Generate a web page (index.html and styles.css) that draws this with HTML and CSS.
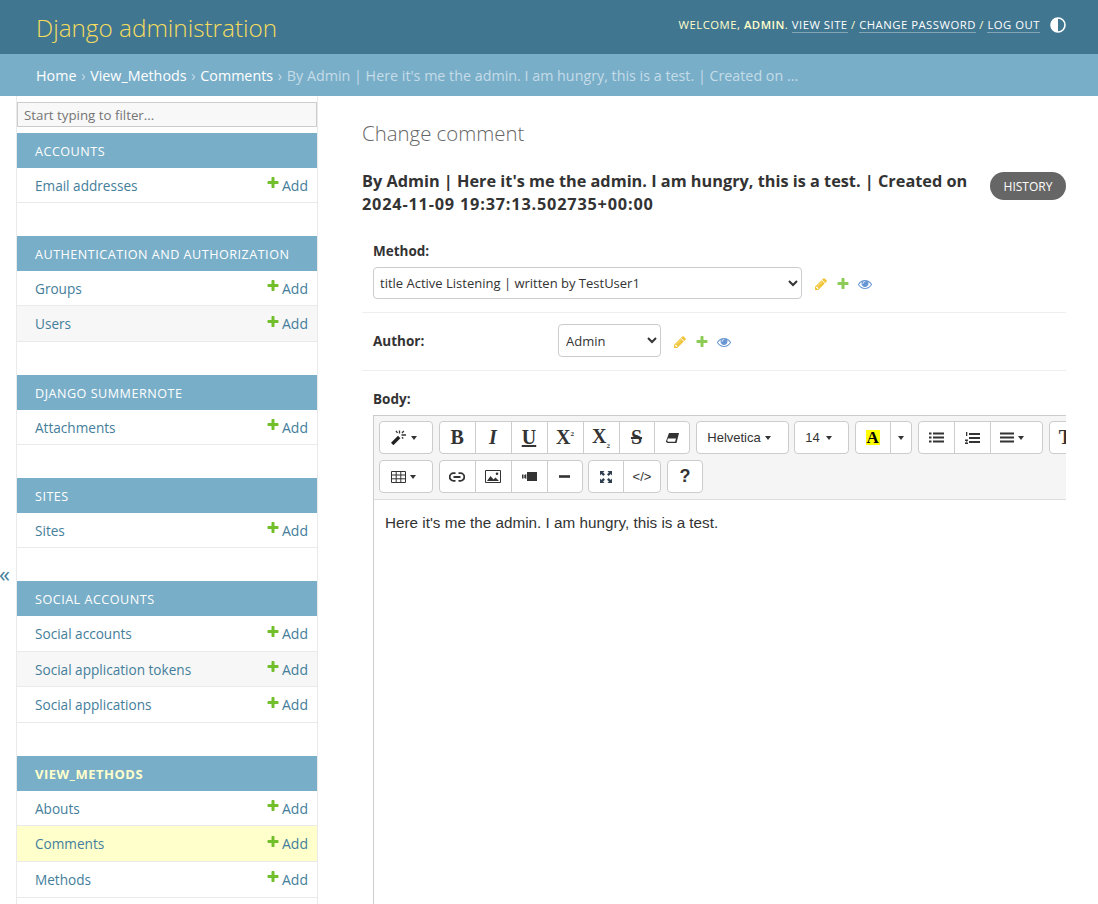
FILE: index.html
```html
<!DOCTYPE html>
<html lang="en">
<head>
    <meta charset="UTF-8">
    <title>Change comment | Django site admin</title>
    <link rel="stylesheet" href="styles.css">
</head>
<body>
    <svg class="defs" width="0" height="0">
        <symbol id="i-plus" viewBox="0 0 1792 1792"><path d="M1600 736v192q0 40-28 68t-68 28h-416v416q0 40-28 68t-68 28h-192q-40 0-68-28t-28-68v-416h-416q-40 0-68-28t-28-68v-192q0-40 28-68t68-28h416v-416q0-40 28-68t68-28h192q40 0 68 28t28 68v416h416q40 0 68 28t28 68z"/></symbol>
        <symbol id="i-pencil" viewBox="0 0 1792 1792"><path d="M491 1536l91-91-235-235-91 91v107h128v128h107zm523-928q0-22-22-22-10 0-17 7l-542 542q-7 7-7 17 0 22 22 22 10 0 17-7l542-542q7-7 7-17zm-54-192l416 416-832 832h-416v-416zm683 96q0 53-37 90l-166 166-416-416 166-165q36-38 90-38 53 0 91 38l235 234q37 39 37 91z"/></symbol>
        <symbol id="i-eye" viewBox="0 0 1792 1792"><path d="M1664 960q-152-236-381-353 61 104 61 225 0 185-131.5 316.5t-316.5 131.5-316.5-131.5-131.5-316.5q0-121 61-225-229 117-381 353 133 205 333.5 326.5t434.5 121.5 434.5-121.5 333.5-326.5zm-720-384q0-20-14-34t-34-14q-125 0-214.5 89.5t-89.5 214.5q0 20 14 34t34 14 34-14 14-34q0-86 61-147t147-61q20 0 34-14t14-34zm848 384q0 34-20 69-140 230-376.5 368.5t-499.5 138.5-499.5-139-376.5-368q-20-35-20-69t20-69q140-229 376.5-368t499.5-139 499.5 139 376.5 368q20 35 20 69z"/></symbol>
    </svg>

    <header class="header">
        <div class="brand">Django administration</div>
        <div class="tools">
            <div class="tool-links">Welcome, <strong>Admin</strong>. <a href="#">View site</a> / <a href="#">Change password</a> / <a href="#">Log out</a></div>
            <svg class="theme" width="16" height="16" viewBox="0 0 16 16"><circle cx="8" cy="8" r="7" fill="none" stroke="#fff" stroke-width="1.6"/><path d="M8 1a7 7 0 0 0 0 14z" fill="#fff"/></svg>
        </div>
    </header>
    <nav class="crumbs">
        <a href="#">Home</a> <i>›</i> <a href="#">View_Methods</a> <i>›</i> <a href="#">Comments</a> <i>›</i> By Admin | Here it's me the admin. I am hungry, this is a test. | Created on ...
    </nav>

    <main class="main">
        <div class="toggle">«</div>
        <aside class="sidebar">
            <input class="filter" placeholder="Start typing to filter...">

            <section class="module">
                <h3>Accounts</h3>
                <div class="row"><a href="#">Email addresses</a><span class="add"><svg><use href="#i-plus"/></svg>Add</span></div>
            </section>
            <section class="module">
                <h3>Authentication and Authorization</h3>
                <div class="row"><a href="#">Groups</a><span class="add"><svg><use href="#i-plus"/></svg>Add</span></div>
                <div class="row alt"><a href="#">Users</a><span class="add"><svg><use href="#i-plus"/></svg>Add</span></div>
            </section>
            <section class="module">
                <h3>Django Summernote</h3>
                <div class="row"><a href="#">Attachments</a><span class="add"><svg><use href="#i-plus"/></svg>Add</span></div>
            </section>
            <section class="module">
                <h3>Sites</h3>
                <div class="row"><a href="#">Sites</a><span class="add"><svg><use href="#i-plus"/></svg>Add</span></div>
            </section>
            <section class="module">
                <h3>Social Accounts</h3>
                <div class="row"><a href="#">Social accounts</a><span class="add"><svg><use href="#i-plus"/></svg>Add</span></div>
                <div class="row alt"><a href="#">Social application tokens</a><span class="add"><svg><use href="#i-plus"/></svg>Add</span></div>
                <div class="row"><a href="#">Social applications</a><span class="add"><svg><use href="#i-plus"/></svg>Add</span></div>
            </section>
            <section class="module">
                <h3 class="current">View_Methods</h3>
                <div class="row"><a href="#">Abouts</a><span class="add"><svg><use href="#i-plus"/></svg>Add</span></div>
                <div class="row selected"><a href="#">Comments</a><span class="add"><svg><use href="#i-plus"/></svg>Add</span></div>
                <div class="row"><a href="#">Methods</a><span class="add"><svg><use href="#i-plus"/></svg>Add</span></div>
            </section>
        </aside>

        <div class="content">
            <h1>Change comment</h1>
            <div class="title-row">
                <h2>By Admin | Here it's me the admin. I am hungry, this is a test. | Created on <span class="stamp">2024-11-09 19:37:13.502735+00:00</span></h2>
                <a class="history" href="#">History</a>
            </div>

            <div class="field stacked">
                <label>Method:</label>
                <div class="control">
                    <select class="method-select"><option>title Active Listening | written by TestUser1</option></select>
                    <span class="rel">
                        <svg class="pencil"><use href="#i-pencil"/></svg>
                        <svg class="plus"><use href="#i-plus"/></svg>
                        <svg class="eye"><use href="#i-eye"/></svg>
                    </span>
                </div>
            </div>
            <div class="field inline">
                <label>Author:</label>
                <div class="control">
                    <select class="author-select"><option>Admin</option></select>
                    <span class="rel">
                        <svg class="pencil"><use href="#i-pencil"/></svg>
                        <svg class="plus"><use href="#i-plus"/></svg>
                        <svg class="eye"><use href="#i-eye"/></svg>
                    </span>
                </div>
            </div>
            <div class="field body-field">
                <label>Body:</label>
                <div class="editor">
                    <div class="toolbar">
                        <div class="tool-row">
                            <div class="group"><button class="w54"><svg width="16" height="15" viewBox="0 0 16 15"><path d="M0 12.800L7 5.800 9.400 8.200 2.400 15.200z" fill="#222"/><path d="M8.500.5v3M10.500 5h4.500M5 .8l1.500 2.200M12.800 1l-1.800 2M12.300 8.500L11 7.200" stroke="#333" stroke-width="1.300" fill="none"/></svg><b class="caret"></b></button></div>
                            <div class="group">
                                <button class="serif"><b>B</b></button>
                                <button class="serif"><b><em>I</em></b></button>
                                <button class="serif"><b><u>U</u></b></button>
                                <button class="serif"><b>X<sup>2</sup></b></button>
                                <button class="serif"><b>X<sub>2</sub></b></button>
                                <button class="serif trim"><b><s>S</s></b></button>
                                <button class="trim"><svg width="14" height="12" viewBox="0 0 14 12"><path d="M4 1h9.500q.5 0 .4.600L11.500 11H2.500L.8 9.800z" fill="#333"/><path d="M2.800 6.500h8.200l-1 3.200H3.200l-1-.8z" fill="#fff"/></svg></button>
                            </div>
                            <div class="group"><button class="font-btn">Helvetica<b class="caret"></b></button></div>
                            <div class="group tight"><button class="size-btn">14<b class="caret"></b></button></div>
                            <div class="group">
                                <button class="serif"><b class="hilite">A</b></button>
                                <button class="w21"><b class="caret"></b></button>
                            </div>
                            <div class="group">
                                <button><svg width="15" height="11" viewBox="0 0 15 11"><path d="M4 1.500h11M4 5.500h11M4 9.500h11" stroke="#333" stroke-width="2"/><path d="M0 .5h2.500v2H0zM0 4.500h2.500v2H0zM0 8.500h2.500v2H0z" fill="#333"/></svg></button>
                                <button><svg width="15" height="12" viewBox="0 0 15 12"><path d="M4 2h11M4 6h11M4 10h11" stroke="#333" stroke-width="2"/><path d="M1 0h1.300v4H1zM0 7.500h3v1L1.300 10.500H3V12H0v-1l1.800-2H0z" fill="#333"/></svg></button>
                                <button class="w53"><svg width="14" height="11" viewBox="0 0 14 11"><path d="M0 1.500h14M0 5.500h14M0 9.500h14" stroke="#333" stroke-width="1.800"/></svg><b class="caret"></b></button>
                            </div>
                            <div class="group"><button class="serif last"><b>T</b></button></div>
                        </div>
                        <div class="tool-row">
                            <div class="group"><button class="w54"><svg width="15" height="12" viewBox="0 0 15 12"><path d="M.5.500h14v11H.500zM.5 4h14M.5 7.800h14M5.200.5v11M9.800.500v11" fill="none" stroke="#333"/></svg><b class="caret"></b></button></div>
                            <div class="group">
                                <button><svg width="16" height="10" viewBox="0 0 16 10"><path d="M6.500 1.200H4.500a3.800 3.800 0 0 0 0 7.600h2M9.500 1.200h2a3.800 3.800 0 0 1 0 7.600h-2M4.500 5h7" fill="none" stroke="#333" stroke-width="1.800"/></svg></button>
                                <button><svg width="16" height="13" viewBox="0 0 16 13"><path d="M.5.500h15v12H.500z" fill="#fff" stroke="#333"/><path d="M2 11l3.500-5 3 3.500 2-2 3.500 3.500z" fill="#333"/><circle cx="12" cy="3.800" r="1.300" fill="#333"/></svg></button>
                                <button><svg width="15" height="9" viewBox="0 0 15 9"><path d="M5 0h10v9H5zM0 2.500h1.500v4H0zM2.300 3l2-1v5l-2-1z" fill="#333"/></svg></button>
                                <button class="trim"><svg width="11" height="3" viewBox="0 0 11 3"><path d="M0 1.500h11" stroke="#333" stroke-width="2.600"/></svg></button>
                            </div>
                            <div class="group tight">
                                <button><svg width="12" height="12" viewBox="0 0 12 12"><path d="M0 0h4.500L3.100 1.400l1.900 1.900-1.700 1.700-1.900-1.900L0 4.500zM12 0v4.500L10.600 3.100 8.700 5 7 3.300l1.900-1.900L7.500 0zM0 12V7.500l1.400 1.400L3.300 7 5 8.700l-1.900 1.900L4.500 12zM12 12H7.500l1.400-1.400L7 8.700 8.700 7l1.900 1.900L12 7.500z" fill="#2f3f4f"/></svg></button>
                                <button class="code">&lt;/&gt;</button>
                            </div>
                            <div class="group"><button class="help">?</button></div>
                        </div>
                    </div>
                    <div class="editable">Here it's me the admin. I am hungry, this is a test.</div>
                </div>
            </div>
        </div>
    </main>
</body>
</html>
```

FILE: styles.css
```css
* {
    box-sizing: border-box;
}
html, body {
    margin: 0;
    height: 904px;
    overflow: hidden;
}
body {
    font-family: "Open Sans", "Noto Sans", sans-serif;
    font-size: 14px;
    color: #333;
    background: #fff;
    display: flex;
    flex-direction: column;
}
a {
    text-decoration: none;
}
.defs {
    position: absolute;
}

/* top bars */
.header {
    height: 54px;
    flex: none;
    background: #417690;
    padding: 0 32px 0 36px;
    display: flex;
    align-items: center;
    justify-content: space-between;
}
.brand {
    font-size: 24.3px;
    font-weight: 300;
    color: #f5dd5d;
}
.tools {
    display: flex;
    align-items: center;
    padding-bottom: 5px;
    color: #ffc;
}
.tool-links {
    font-size: 11.3px;
    letter-spacing: 0.5px;
    text-transform: uppercase;
    white-space: nowrap;
}
.tools strong {
    font-weight: 600;
}
.tools a {
    color: #fff;
    border-bottom: 1px solid rgba(255,255,255,0.35);
}
.theme {
    margin-left: 10px;
}
.crumbs {
    height: 42px;
    flex: none;
    background: #79aec8;
    padding: 0 36px;
    font-size: 14.3px;
    line-height: 44px;
    color: #c4dce8;
    white-space: nowrap;
}
.crumbs a {
    color: #fff;
}
.crumbs i {
    font-style: normal;
    margin: 0 1px;
}

/* sidebar */
.main {
    flex: 1;
    display: flex;
    min-height: 0;
}
.toggle {
    width: 17px;
    flex: none;
    border-right: 1px solid #eaeaea;
    color: #447e9b;
    font-size: 22px;
    line-height: 1;
    padding-top: 466px;
    text-indent: -1px;
}
.sidebar {
    width: 301px;
    flex: none;
    border-right: 1px solid #eaeaea;
    padding-top: 6px;
    overflow: hidden;
}
.filter {
    display: block;
    width: 300px;
    height: 25px;
    margin-bottom: 6px;
    padding: 0 6px;
    border: 1px solid #ccc;
    background: #f8f8f8;
    font: 13.3px "Open Sans", sans-serif;
}
.filter::placeholder {
    color: #757575;
}
.module {
    margin-bottom: 32.9px;
}
.module h3 {
    margin: 0;
    height: 34.6px;
    padding: 0 18px;
    background: #79aec8;
    color: #fff;
    font-size: 12.6px;
    font-weight: 400;
    letter-spacing: 0.5px;
    line-height: 37.5px;
    text-transform: uppercase;
}
.module h3.current {
    color: #ffc;
    font-size: 13px;
    font-weight: 700;
}
.row {
    height: 35.7px;
    padding: 0.4px 9px 0 18px;
    border-bottom: 1px solid #eaeaea;
    display: flex;
    align-items: center;
    justify-content: space-between;
}
.row.alt {
    background: #f7f7f7;
}
.row.selected {
    background: #ffc;
}
.row a {
    color: #447e9b;
    font-size: 13.6px;
}
.add {
    color: #447e9b;
    display: flex;
    align-items: center;
}
.add svg {
    width: 14px;
    height: 14px;
    fill: #70bf2b;
    margin: -4px 2px 0 0;
}

/* form */
.content {
    flex: 1;
    min-width: 0;
    padding: 23px 32px 0 44px;
    display: flex;
    flex-direction: column;
}
.content h1 {
    margin: 0 0 23px;
    font-size: 20.4px;
    font-weight: 300;
    line-height: 28px;
    color: #666;
}
.title-row {
    display: flex;
    align-items: flex-start;
    justify-content: space-between;
    gap: 20px;
    margin-bottom: 24px;
}
.title-row h2 {
    margin: 0;
    font-size: 16.3px;
    font-weight: 700;
    line-height: 23px;
    color: #333;
}
.stamp {
    letter-spacing: 0.8px;
}
.history {
    flex: none;
    margin-top: 2px;
    width: 76px;
    height: 28px;
    border-radius: 14px;
    background: #666;
    color: #fff;
    font-size: 12px;
    line-height: 29px;
    text-align: center;
    text-transform: uppercase;
}
.field {
    flex: none;
    border-bottom: 1px solid #eee;
    padding: 0 0 0 11px;
}
.field label {
    font-size: 13.5px;
    font-weight: 700;
    color: #333;
}
.stacked {
    height: 73px;
}
.stacked label {
    display: block;
    line-height: 22px;
    margin-bottom: 5px;
}
.inline {
    height: 58px;
    display: flex;
    align-items: center;
}
.inline label {
    width: 185px;
    margin-top: -1px;
}
.control {
    display: flex;
    align-items: center;
}
select {
    height: 32px;
    padding: 0 2px;
    border: 1px solid #ccc;
    border-radius: 4px;
    background: #fff;
    color: #333;
    font: 13px "Open Sans", sans-serif;
}
.method-select {
    width: 429px;
}
.author-select {
    width: 103px;
    height: 33px;
    margin-top: -2px;
    padding-left: 3px;
}
.rel {
    display: flex;
    align-items: center;
    gap: 8px;
    margin: 1px 0 0 12px;
}
.rel svg {
    width: 14px;
    height: 14px;
    opacity: 0.8;
}
.pencil {
    fill: #efb80b;
}
.plus {
    fill: #70bf2b;
}
.eye {
    fill: #447ec9;
}

/* summernote */
.body-field {
    flex: 1;
    min-height: 0;
    display: flex;
    flex-direction: column;
    border-bottom: 0;
    padding-top: 18px;
}
.body-field label {
    display: block;
    line-height: 20px;
    margin-bottom: 6px;
}
.editor {
    flex: 1;
    min-height: 0;
    border: solid #ccc;
    border-width: 1px 0 0 1px;
    overflow: hidden;
    font-family: "Liberation Sans", Arial, sans-serif;
}
.toolbar {
    background: #f5f5f5;
    border-bottom: 1px solid #ddd;
    padding: 5px 0 5px 5px;
    width: 692px;
    height: 84px;
    overflow: hidden;
}
.tool-row {
    display: flex;
    height: 33px;
    margin-bottom: 6px;
    gap: 6px;
}
.group {
    display: flex;
    flex: none;
}
.group.tight {
    margin-left: -1px;
}
.group button {
    width: 36.5px;
    height: 33px;
    margin-left: -1px;
    padding: 0;
    border: 1px solid #ccc;
    background: #fff;
    color: #333;
    font: 13px "Liberation Sans", Arial, sans-serif;
    display: flex;
    align-items: center;
    justify-content: center;
    gap: 4px;
}
.group button + button {
    width: 37px;
}
.group button:first-child {
    margin-left: 0;
    border-radius: 4px 0 0 4px;
}
.group button:last-child {
    border-radius: 0 4px 4px 0;
}
.group button:only-child {
    border-radius: 4px;
}
.group .trim {
    width: 36px;
}
.group .w54 {
    width: 54px;
    padding-right: 5px;
}
.group .w53 {
    width: 53px;
    padding-right: 8px;
}
.group .w21 {
    width: 22px;
}
.group .font-btn {
    width: 93px;
    padding-right: 6px;
}
.group .size-btn {
    width: 55px;
    padding-right: 5px;
    gap: 6px;
}
.group .serif {
    font: bold 20px "Liberation Serif", serif;
}
.group .last {
    width: 40px;
    padding-right: 6px;
}
.group .code {
    width: 38px;
}
.group .help {
    width: 36px;
    font-size: 18px;
    font-weight: 700;
}
.group sup, .group sub {
    font-size: 7px;
}
.caret {
    width: 0;
    height: 0;
    border: 3.5px solid transparent;
    border-top: 4px solid #333;
    border-bottom: 0;
}
.hilite {
    display: block;
    width: 14px;
    height: 15px;
    background: #ff0;
    color: #000;
    font-size: 17px;
    line-height: 16px;
    text-align: center;
}
.editable {
    padding: 10px 11px;
    line-height: 26px;
    font-size: 15.25px;
    color: #333;
}
```
